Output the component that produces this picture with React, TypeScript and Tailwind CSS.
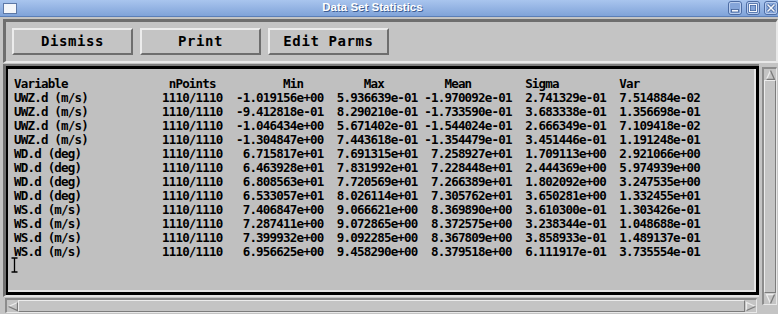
import React from 'react';

type Row = [string, string, string, string, string, string];

// variable, min, max, mean, sigma, var
const rows: Row[] = [
  ['UWZ.d (m/s)', '-1.019156e+00', '5.936639e-01', '-1.970092e-01', '2.741329e-01', '7.514884e-02'],
  ['UWZ.d (m/s)', '-9.412818e-01', '8.290210e-01', '-1.733590e-01', '3.683338e-01', '1.356698e-01'],
  ['UWZ.d (m/s)', '-1.046434e+00', '5.671402e-01', '-1.544024e-01', '2.666349e-01', '7.109418e-02'],
  ['UWZ.d (m/s)', '-1.304847e+00', '7.443618e-01', '-1.354479e-01', '3.451446e-01', '1.191248e-01'],
  ['WD.d (deg)', '6.715817e+01', '7.691315e+01', '7.258927e+01', '1.709113e+00', '2.921066e+00'],
  ['WD.d (deg)', '6.463928e+01', '7.831992e+01', '7.228448e+01', '2.444369e+00', '5.974939e+00'],
  ['WD.d (deg)', '6.808563e+01', '7.720569e+01', '7.266389e+01', '1.802092e+00', '3.247535e+00'],
  ['WD.d (deg)', '6.533057e+01', '8.026114e+01', '7.305762e+01', '3.650281e+00', '1.332455e+01'],
  ['WS.d (m/s)', '7.406847e+00', '9.066621e+00', '8.369890e+00', '3.610300e-01', '1.303426e-01'],
  ['WS.d (m/s)', '7.287411e+00', '9.072865e+00', '8.372575e+00', '3.238344e-01', '1.048688e-01'],
  ['WS.d (m/s)', '7.399932e+00', '9.092285e+00', '8.367809e+00', '3.858933e-01', '1.489137e-01'],
  ['WS.d (m/s)', '6.956625e+00', '9.458290e+00', '8.379518e+00', '6.111917e-01', '3.735554e-01'],
];

const header =
  'Variable'.padEnd(23) +
  'nPoints'.padEnd(17) +
  'Min'.padEnd(12) +
  'Max'.padEnd(12) +
  'Mean'.padEnd(12) +
  'Sigma'.padEnd(14) +
  'Var';

const fmt = (s: string) => s.padStart(13, ' ');

const lines = rows.map(
  ([name, min, max, mean, sigma, v]) =>
    name.padEnd(22) + '1110/1110' + '  ' + [min, max, mean, sigma, v].map(fmt).join(' ')
);

function WinButton({ kind }: { kind: 'min' | 'max' | 'close' }) {
  return (
    <svg width="14" height="14" viewBox="0 0 14 14">
      <rect x="0.5" y="0.5" width="13" height="13" rx="2.5" fill="#85a5d9" stroke="#4d6ca3" />
      <rect x="1.5" y="1.5" width="11" height="11" rx="1.5" fill="none" stroke="#b9cdee" />
      {kind === 'min' && (
        <rect x="3.5" y="8.5" width="7" height="2.5" fill="#f3f6fc" stroke="#3f5f96" strokeWidth="0.8" />
      )}
      {kind === 'max' && (
        <>
          <rect x="3.5" y="3.5" width="7" height="7" fill="none" stroke="#3f5f96" strokeWidth="2.2" />
          <rect x="3.5" y="3.5" width="7" height="7" fill="none" stroke="#f3f6fc" strokeWidth="1" />
        </>
      )}
      {kind === 'close' && (
        <>
          <path d="M3.5 3.5 L10.5 10.5 M10.5 3.5 L3.5 10.5" stroke="#3f5f96" strokeWidth="3" />
          <path d="M3.5 3.5 L10.5 10.5 M10.5 3.5 L3.5 10.5" stroke="#f3f6fc" strokeWidth="1.6" />
        </>
      )}
    </svg>
  );
}

// Motif style arrow: light edge on the upper left, dark edge on the lower right
function Arrow({ dir }: { dir: 'up' | 'down' | 'left' | 'right' }) {
  const shapes = {
    up: { fill: '1.5,10.5 5.5,1.5 9.5,10.5', light: 'M1.5 10.5 L5.5 1.5', dark: 'M5.5 1.5 L9.5 10.5 L1.5 10.5' },
    down: { fill: '1.5,1.5 9.5,1.5 5.5,10.5', light: 'M5.5 10.5 L1.5 1.5 L9.5 1.5', dark: 'M9.5 1.5 L5.5 10.5' },
    left: { fill: '10.5,1.5 10.5,9.5 1.5,5.5', light: 'M1.5 5.5 L10.5 1.5', dark: 'M10.5 1.5 L10.5 9.5 L1.5 5.5' },
    right: { fill: '1.5,1.5 10.5,5.5 1.5,9.5', light: 'M1.5 9.5 L1.5 1.5 L10.5 5.5', dark: 'M10.5 5.5 L1.5 9.5' },
  }[dir];
  return (
    <svg width="11" height="11" viewBox="0 0 11 11" className="shrink-0">
      <polygon points={shapes.fill} fill="#c4c4c4" />
      <path d={shapes.light} stroke="#ececec" strokeWidth="1.3" fill="none" />
      <path d={shapes.dark} stroke="#7a7a7a" strokeWidth="1.3" fill="none" />
    </svg>
  );
}

function PushButton({ label }: { label: string }) {
  return (
    <button className="flex h-[27px] w-[121px] items-center justify-center border-2 border-t-[#ececec] border-l-[#ececec] border-b-[#6e6e6e] border-r-[#6e6e6e] bg-[#c4c4c4] font-['DejaVu_Sans_Mono',monospace] text-[14px] font-bold tracking-[0.6px] text-black">
      {label}
    </button>
  );
}

export default function App() {
  return (
    <div className="relative h-[314px] w-[778px] overflow-hidden bg-[#c4c4c4]">
      {/* Title bar */}
      <div className="flex h-[17px] items-center border-b border-[#5b7fb8] bg-gradient-to-b from-[#a9c5ee] to-[#80a3d9]">
        <div className="ml-[3px] h-[11px] w-[14px] border border-[#5d78a6] bg-[#f4f6fa]" />
        <div className="flex flex-1 justify-center font-['Liberation_Sans',sans-serif] text-[11.5px] font-bold text-white [text-shadow:1px_1px_0_#3d5d92]">
          Data Set Statistics
        </div>
        <div className="flex gap-[4px]">
          <WinButton kind="min" />
          <WinButton kind="max" />
          <WinButton kind="close" />
        </div>
      </div>

      {/* Button row */}
      <div className="ml-[3px] mt-[2px] flex h-[44px] w-[775px] gap-[7px] border-t-[3px] border-l-[3px] border-b-2 border-r-2 border-t-[#6e6e6e] border-l-[#6e6e6e] border-b-[#e8e8e8] border-r-[#e8e8e8] pl-[6px] pt-[6px]">
        <PushButton label="Dismiss" />
        <PushButton label="Print" />
        <PushButton label="Edit Parms" />
      </div>

      <div className="flex">
        <div className="ml-[3px] mt-[1px] w-[756px]">
          {/* Text area */}
          <div className="h-[233px] border-t-2 border-l-[3px] border-b-2 border-t-[#7c7c7c] border-l-[#707070] border-b-[#e4e4e4]">
            <div className="h-[229px] border-[3px] border-l-2 border-black">
              <div className="relative h-full border-r-2 border-b-2 border-[#e4e4e4] bg-[#c0c0c0] pl-[6px] pt-[8px]">
                <div className="whitespace-pre font-['DejaVu_Sans_Mono',monospace] text-[12.5px] font-bold leading-[14px] tracking-[-0.8px] text-black">
                  <div>{header}</div>
                  {lines.map((l, i) => (
                    <div key={i}>{l}</div>
                  ))}
                </div>
                {/* mouse I-beam */}
                <svg width="7" height="16" viewBox="0 0 7 16" className="absolute left-[3px] top-[188px]">
                  <path d="M0.5 1 H6.5 M3.5 1 V15 M0.5 15 H6.5" stroke="#000" strokeWidth="1.3" fill="none" />
                </svg>
              </div>
            </div>
          </div>

          {/* Horizontal scrollbar */}
          <div className="ml-[2px] mt-[1px] flex h-[15px] w-[752px] items-center border-t-2 border-l-2 border-b border-r border-t-[#8c8c8c] border-l-[#8c8c8c] border-b-[#e8e8e8] border-r-[#e8e8e8] bg-[#c4c4c4]">
            <Arrow dir="left" />
            <div className="h-full flex-1 border border-t-[#ececec] border-l-[#ececec] border-b-[#7c7c7c] border-r-[#7c7c7c]" />
            <Arrow dir="right" />
          </div>
        </div>

        {/* Vertical scrollbar */}
        <div className="ml-[3px] mt-[4px] flex h-[238px] w-[15px] flex-col items-center border-t-2 border-l-2 border-b border-r border-t-[#8c8c8c] border-l-[#8c8c8c] border-b-[#e8e8e8] border-r-[#e8e8e8] bg-[#c4c4c4]">
          <Arrow dir="up" />
          <div className="w-full flex-1 border border-t-[#ececec] border-l-[#ececec] border-b-[#7c7c7c] border-r-[#7c7c7c]" />
          <Arrow dir="down" />
        </div>
      </div>
    </div>
  );
}
